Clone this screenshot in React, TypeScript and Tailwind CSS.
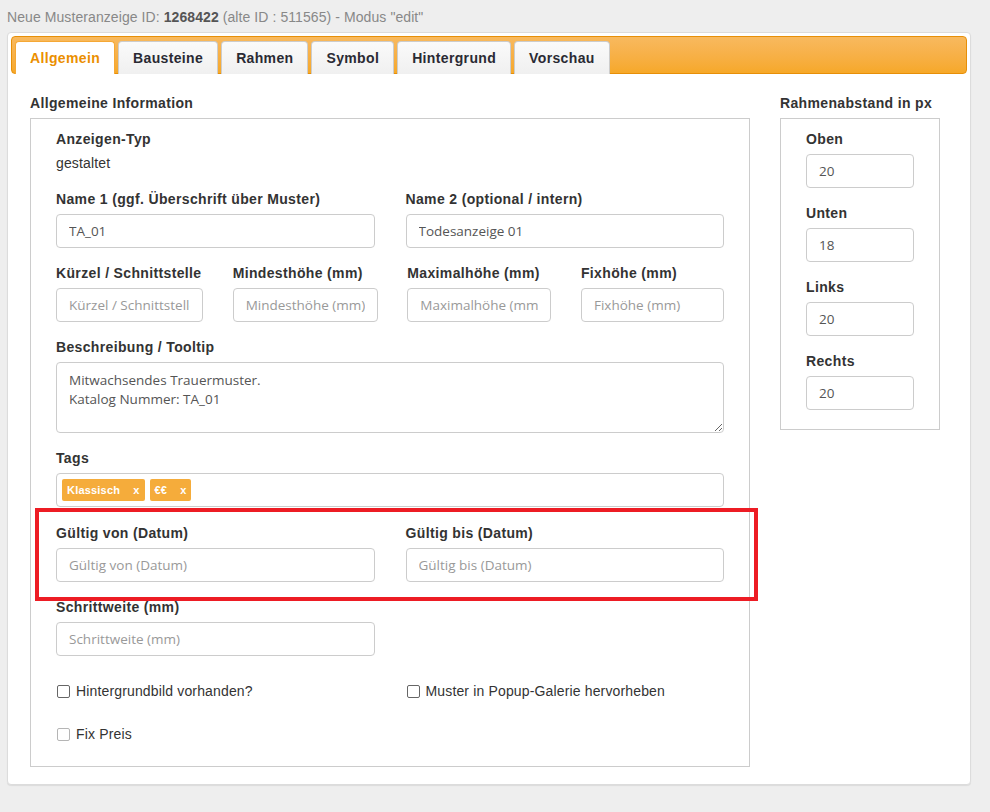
import { type ReactNode } from 'react';

const labelCls = 'block text-[14px] leading-[20px] font-bold tracking-[0.35px] text-[#333] mb-[5px]';
const inputCls =
  'block w-full h-[34px] rounded-[4px] border border-[#ccc] bg-white px-[12px] text-[13.5px] text-[#555] placeholder:text-[#999] outline-none';
const inputFont = { fontFamily: '"Open Sans", "DejaVu Sans", sans-serif' };

function Field({ label, value, placeholder }: { label: string; value?: string; placeholder?: string }) {
  return (
    <div>
      <label className={labelCls}>{label}</label>
      <input className={inputCls} style={inputFont} defaultValue={value} placeholder={placeholder} />
    </div>
  );
}

function Check({ label, light }: { label: ReactNode; light?: boolean }) {
  return (
    <div className="flex h-[20px] items-center gap-[6px] pl-[1px]">
      <span
        className={
          'block h-[13px] w-[13px] rounded-[2px] border bg-white ' + (light ? 'border-[#b5b5b5]' : 'border-[#666]')
        }
      />
      <span className="text-[14px] tracking-[0.15px] text-[#333]">{label}</span>
    </div>
  );
}

function Tag({ children }: { children: ReactNode }) {
  return (
    <span className="flex h-[22px] items-center gap-[13px] rounded-[2px] bg-[#f5ac3b] px-[5px] text-[11px] font-bold tracking-[0.2px] text-white">
      <span>{children}</span>
      <span>x</span>
    </span>
  );
}

const tabs = ['Allgemein', 'Bausteine', 'Rahmen', 'Symbol', 'Hintergrund', 'Vorschau'];

export default function App() {
  return (
    <div
      className="min-h-[812px] bg-[#eeeeee] px-[7px] pt-[7px]"
      style={{ fontFamily: '"Liberation Sans", Arial, sans-serif' }}
    >
      <div className="text-[14px] leading-[20px] tracking-[0.08px] text-[#888]">
        Neue Musteranzeige ID: <b className="text-[#555]">1268422</b> (alte ID : 511565) - Modus "edit"
      </div>

      <div className="mt-[5px] w-[964px] rounded-[4px] border border-[#dcdcdc] bg-white p-[3px] shadow-[0_1px_1px_rgba(0,0,0,0.08)]">
        {/* tab strip */}
        <div className="flex h-[38px] items-end gap-[3px] rounded-[4px] border border-[#e78f08] bg-gradient-to-b from-[#f8b95e] to-[#f6a828] pl-[3px]">
          {tabs.map((t, i) => (
            <div
              key={t}
              className={
                'relative -mb-px flex h-[33px] items-center rounded-t-[4px] border border-b-0 px-[14px] text-[14px] font-bold tracking-[0.35px] ' +
                (i === 0
                  ? 'border-[#f5a835] bg-white text-[#eb8f00]'
                  : 'border-[#cccccc] bg-gradient-to-b from-[#fafafa] to-[#f0f0f0] text-[#2a2a33]')
              }
            >
              {t}
            </div>
          ))}
        </div>

        {/* content */}
        <div className="flex gap-[30px] px-[19px] pb-[14px] pt-[19px]">
          <section className="w-[720px]">
            <div className={labelCls}>Allgemeine Information</div>
            <div className="flex flex-col gap-[15px] border border-[#ccc] px-[25px] pb-[22px] pt-[10px]">
              <div className="mb-px">
                <div className="mb-[4px] text-[14px] font-bold leading-[20px] tracking-[0.35px] text-[#333]">
                  Anzeigen-Typ
                </div>
                <div className="text-[14px] leading-[20px] tracking-[0.15px] text-[#333]">gestaltet</div>
              </div>

              <div className="grid grid-cols-2 gap-[31px]">
                <Field label="Name 1 (ggf. Überschrift über Muster)" value="TA_01" />
                <Field label="Name 2 (optional / intern)" value="Todesanzeige 01" />
              </div>

              <div className="grid grid-cols-[147px_145px_144px_143px] justify-between">
                <Field label="Kürzel / Schnittstelle" placeholder="Kürzel / Schnittstelle" />
                <Field label="Mindesthöhe (mm)" placeholder="Mindesthöhe (mm)" />
                <Field label="Maximalhöhe (mm)" placeholder="Maximalhöhe (mm)" />
                <Field label="Fixhöhe (mm)" placeholder="Fixhöhe (mm)" />
              </div>

              <div>
                <label className={labelCls}>Beschreibung / Tooltip</label>
                <textarea
                  className="block h-[71px] w-full rounded-[4px] border border-[#ccc] px-[12px] pt-[8px] text-[13.5px] leading-[19px] text-[#555] outline-none"
                  style={inputFont}
                  defaultValue={'Mitwachsendes Trauermuster.\nKatalog Nummer: TA_01'}
                />
              </div>

              <div>
                <label className={labelCls}>Tags</label>
                <div className="flex h-[34px] items-center gap-[5px] rounded-[4px] border border-[#ccc] px-[5px]">
                  <Tag>Klassisch</Tag>
                  <Tag>€€</Tag>
                </div>
              </div>

              <div className="relative mt-px">
                <div className="grid grid-cols-2 gap-[31px]">
                  <Field label="Gültig von (Datum)" placeholder="Gültig von (Datum)" />
                  <Field label="Gültig bis (Datum)" placeholder="Gültig bis (Datum)" />
                </div>
                <div className="pointer-events-none absolute -bottom-[19px] -left-[21px] -right-[34px] -top-[15px] border-[4px] border-[#ed1c24]" />
              </div>

              <div className="grid grid-cols-2 gap-[31px]">
                <Field label="Schrittweite (mm)" placeholder="Schrittweite (mm)" />
              </div>

              <div className="mt-[10px] grid grid-cols-2 gap-[31px]">
                <Check label="Hintergrundbild vorhanden?" />
                <Check label="Muster in Popup-Galerie hervorheben" />
              </div>

              <div className="mt-[8px]">
                <Check label="Fix Preis" light />
              </div>
            </div>
          </section>

          <aside className="w-[160px]">
            <div className={labelCls}>Rahmenabstand in px</div>
            <div className="flex flex-col gap-[15px] border border-[#ccc] px-[25px] pb-[19px] pt-[10px]">
              <Field label="Oben" value="20" />
              <Field label="Unten" value="18" />
              <Field label="Links" value="20" />
              <Field label="Rechts" value="20" />
            </div>
          </aside>
        </div>
      </div>
    </div>
  );
}
